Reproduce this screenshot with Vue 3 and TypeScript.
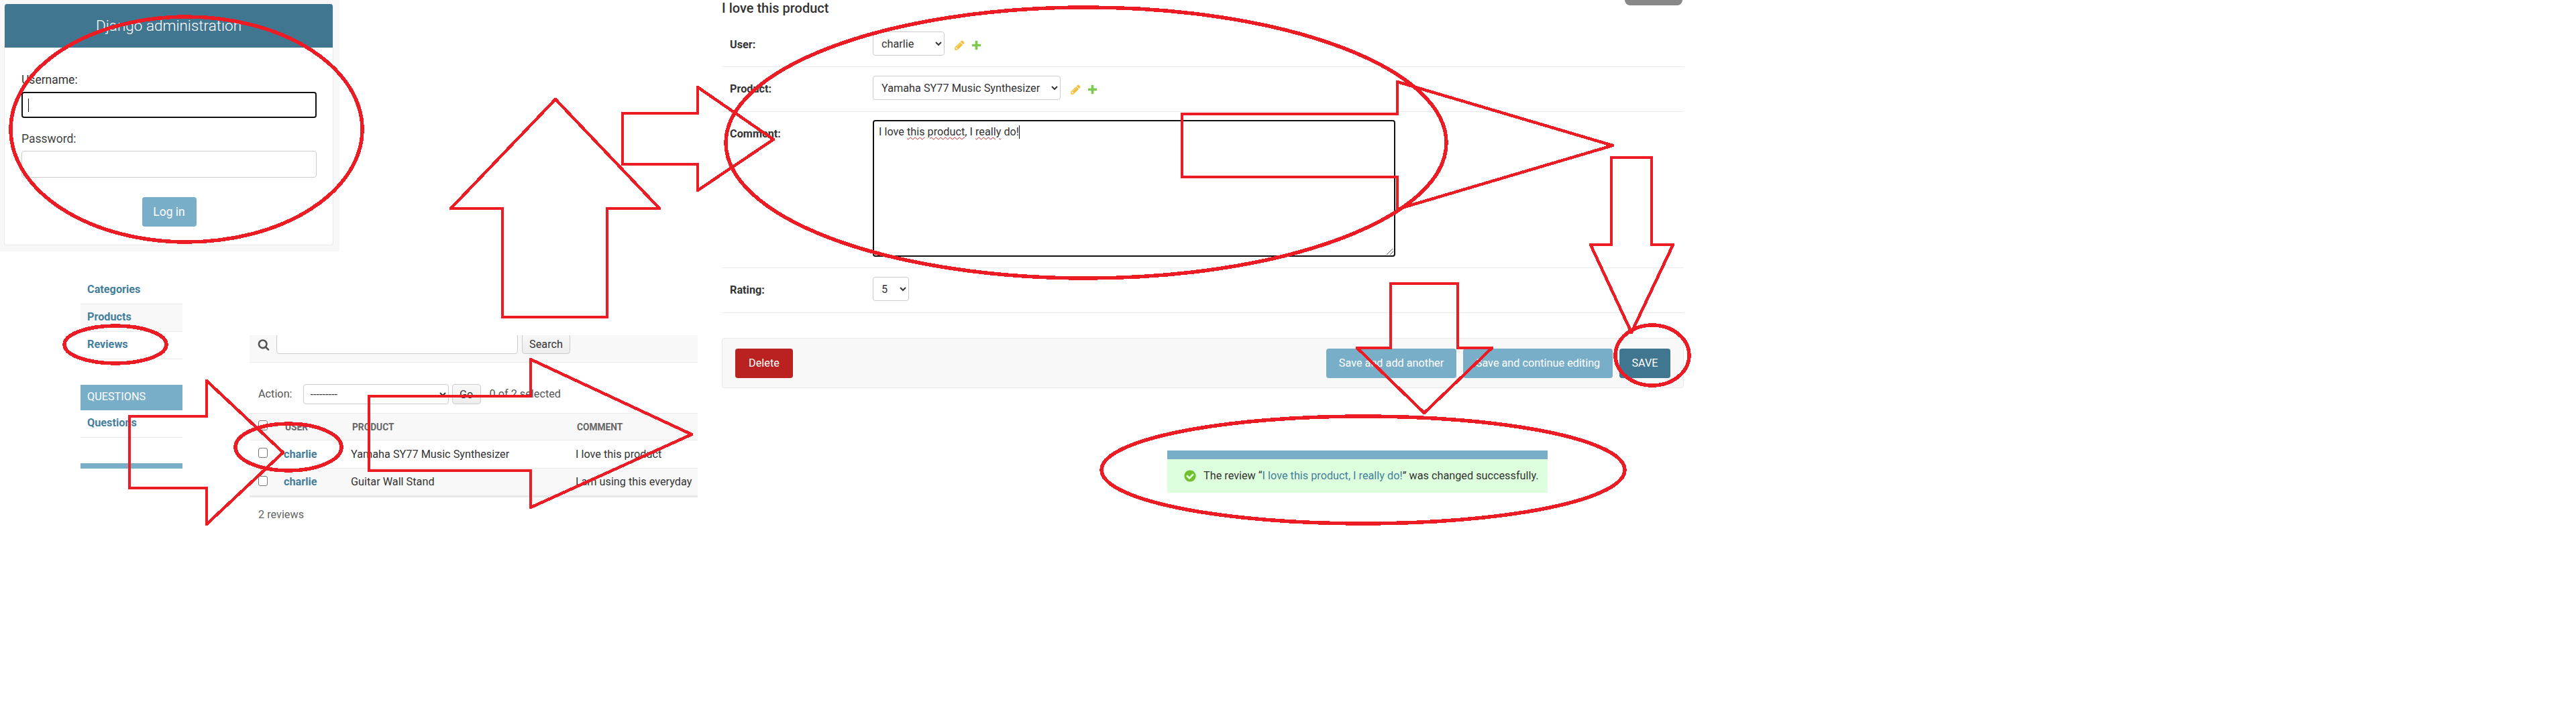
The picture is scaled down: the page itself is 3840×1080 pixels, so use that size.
<script setup lang="ts">
type Pt = [number, number]

const arrows: Pt[][] = [
  [[828, 148], [983, 311], [905, 311], [905, 473], [749, 473], [749, 311], [672, 311]],
  [[928, 169], [1040, 169], [1040, 130], [1153, 208], [1040, 284], [1040, 245], [928, 245]],
  [[1762, 170], [2083, 170], [2083, 122], [2404, 217], [2083, 312], [2083, 264], [1762, 264]],
  [[2402, 235], [2462, 235], [2462, 365], [2494, 365], [2432, 496], [2371, 365], [2402, 365]],
  [[2073, 423], [2173, 423], [2173, 519], [2224, 519], [2123, 616], [2023, 519], [2073, 519]],
  [[193, 621], [308, 621], [308, 568], [422, 675], [308, 782], [308, 728], [193, 728]],
  [[550, 591], [791, 591], [791, 536], [1031, 648], [791, 757], [791, 702], [550, 702]],
]

const rings = [
  { cx: 278, cy: 193, rx: 262, ry: 168 },
  { cx: 172, cy: 514, rx: 76, ry: 28 },
  { cx: 430, cy: 667, rx: 79, ry: 35 },
  { cx: 1619, cy: 213, rx: 537, ry: 202 },
  { cx: 2463, cy: 530, rx: 55, ry: 45 },
  { cx: 2032, cy: 701, rx: 390, ry: 80 },
]

const points = (a: Pt[]) => a.map((p) => p.join(',')).join(' ')

const reviews = [
  { user: 'charlie', product: 'Yamaha SY77 Music Synthesizer', comment: 'I love this product' },
  { user: 'charlie', product: 'Guitar Wall Stand', comment: 'I am using this everyday' },
]

const pencil =
  'M491 1536l91-91-235-235-91 91v107h128v128h107zm523-928q0-22-22-22-10 0-17 7l-542 542q-7 7-7 17 0 22 22 22 10 0 17-7l542-542q7-7 7-17zm-54-192l416 416-832 832h-416v-416zm683 96q0 53-37 90l-166 166-416-416 166-165q36-38 90-38 53 0 91 38l235 234q37 39 37 91z'
const plus =
  'M1600 796v192q0 40-28 68t-68 28h-416v416q0 40-28 68t-68 28h-192q-40 0-68-28t-28-68v-416h-416q-40 0-68-28t-28-68v-192q0-40 28-68t68-28h416v-416q0-40 28-68t68-28h192q40 0 68 28t28 68v416h416q40 0 68 28t28 68z'
const check =
  'M1412 734q0-28-18-46l-91-90q-19-19-45-19t-45 19l-408 407-226-226q-19-19-45-19t-45 19l-91 90q-18 18-18 46 0 27 18 45l362 362q19 19 45 19 27 0 46-19l543-543q18-18 18-45zm252 162q0 209-103 385.5t-279.5 279.5-385.5 103-385.5-103-279.5-279.5-103-385.5 103-385.5 279.5-279.5 385.5-103 385.5 103 279.5 279.5 103 385.5z'
const search =
  'M1216 832q0-185-131.5-316.5t-316.5-131.5-316.5 131.5-131.5 316.5 131.5 316.5 316.5 131.5 316.5-131.5 131.5-316.5zm512 832q0 52-38 90t-90 38q-54 0-90-38l-343-342q-179 124-399 124-143 0-273.5-55.5t-225-150-150-225-55.5-273.5 55.5-273.5 150-225 225-150 273.5-55.5 273.5 55.5 225 150 150 225 55.5 273.5q0 220-124 399l343 343q37 37 37 90z'
</script>

<template>
  <div class="canvas">
    <!-- login crop -->
    <section class="login">
      <div class="login-card">
        <h1>Django administration</h1>
        <form class="login-form" @submit.prevent>
          <label>Username:</label>
          <div class="login-focus"><span class="caret"></span></div>
          <label class="pw-label">Password:</label>
          <input class="login-input" type="password" />
          <button class="login-btn">Log in</button>
        </form>
      </div>
    </section>

    <!-- sidebar crop -->
    <nav class="sidebar">
      <a class="side-row">Categories</a>
      <a class="side-row shaded">Products</a>
      <a class="side-row">Reviews</a>
      <div class="side-head">Questions</div>
      <a class="side-row">Questions</a>
      <div class="side-bar"></div>
    </nav>

    <!-- changelist crop -->
    <section class="changelist">
      <div class="toolbar">
        <svg class="search-icon" viewBox="0 0 1792 1792"><path :d="search" fill="#555" /></svg>
        <input class="search-input" type="text" />
        <button class="plain-btn search-btn">Search</button>
      </div>
      <div class="actions">
        <span>Action:</span>
        <select class="action-select"><option>---------</option></select>
        <button class="plain-btn go-btn">Go</button>
        <span class="counter">0 of 2 selected</span>
      </div>
      <table class="results">
        <thead>
          <tr>
            <th class="c-check"><input type="checkbox" class="box" /></th>
            <th class="c-user">User</th>
            <th class="c-product">Product</th>
            <th>Comment</th>
          </tr>
        </thead>
        <tbody>
          <tr v-for="(r, i) in reviews" :key="i">
            <td class="c-check"><input type="checkbox" class="box" /></td>
            <td><a class="user-link">{{ r.user }}</a></td>
            <td>{{ r.product }}</td>
            <td>{{ r.comment }}</td>
          </tr>
        </tbody>
      </table>
      <p class="paginator">2 reviews</p>
    </section>

    <!-- change form crop -->
    <section class="change-form">
      <h2>I love this product</h2>
      <div class="form-row">
        <label>User:</label>
        <select class="sel sel-user"><option>charlie</option></select>
        <svg class="rel-icon first" viewBox="0 0 1792 1792"><path :d="pencil" fill="#f2bf3c" /></svg>
        <svg class="rel-icon" viewBox="0 0 1792 1792"><path :d="plus" fill="#7ec84f" /></svg>
      </div>
      <div class="form-row tall">
        <label>Product:</label>
        <select class="sel sel-product"><option>Yamaha SY77 Music Synthesizer</option></select>
        <svg class="rel-icon first" viewBox="0 0 1792 1792"><path :d="pencil" fill="#f2bf3c" /></svg>
        <svg class="rel-icon" viewBox="0 0 1792 1792"><path :d="plus" fill="#7ec84f" /></svg>
      </div>
      <div class="form-row comment-row">
        <label>Comment:</label>
        <div class="comment-box">
          I love <span class="typo">this</span> <span class="typo">product</span>, I <span class="typo">really</span> do!<span class="caret"></span>
          <svg class="grip" viewBox="0 0 12 12"><path d="M1 11 10 2M6 11l5-5" stroke="#555" fill="none" /></svg>
        </div>
      </div>
      <div class="form-row tall">
        <label>Rating:</label>
        <select class="sel sel-rating"><option>5</option></select>
      </div>
      <div class="submit-row">
        <button class="btn delete">Delete</button>
        <div class="submit-right">
          <button class="btn soft w-add">Save and add another</button>
          <button class="btn soft w-cont">Save and continue editing</button>
          <button class="btn save">SAVE</button>
        </div>
      </div>
    </section>

    <div class="history-tab"></div>

    <!-- success message crop -->
    <section class="message">
      <div class="message-bar"></div>
      <div class="message-body">
        <svg class="msg-icon" viewBox="0 0 1792 1792"><path :d="check" fill="#70bf2b" /></svg>
        <span>The review “<a class="msg-link">I love this product, I really do!</a>” was changed successfully.</span>
      </div>
    </section>

    <!-- hand-drawn annotations -->
    <svg class="marks" width="3840" height="1080" viewBox="0 0 3840 1080">
      <polygon v-for="(a, i) in arrows" :key="'a' + i" :points="points(a)" />
      <ellipse v-for="(r, i) in rings" :key="'r' + i" :cx="r.cx" :cy="r.cy" :rx="r.rx" :ry="r.ry" />
    </svg>
  </div>
</template>

<style scoped>
.canvas {
  position: relative;
  width: 3840px;
  height: 1080px;
  overflow: hidden;
  background: #fff;
  color: #333;
  font: 16.25px/20px Roboto, "Liberation Sans", sans-serif;
}

a { color: #447e9b; }
button { font-family: inherit; cursor: pointer; }
select, input { font-family: inherit; box-sizing: border-box; }

.caret {
  display: inline-block;
  width: 1px;
  height: 20px;
  background: #111;
  vertical-align: top;
}

/* login */
.login {
  position: absolute;
  left: 0;
  top: 0;
  width: 506px;
  height: 375px;
  box-sizing: border-box;
  padding: 6px 9px 9px 6px;
  background: #f8f8f8;
}
.login-card {
  height: 100%;
  box-sizing: border-box;
  background: #fff;
  border: 1px solid #eaeaea;
  border-top: 0;
  border-radius: 4px;
  overflow: hidden;
}
.login-card h1 {
  margin: 0;
  height: 65px;
  background: #417690;
  color: #fff;
  font-size: 22.5px;
  font-weight: 300;
  line-height: 64px;
  text-align: center;
}
.login-form {
  display: flex;
  flex-direction: column;
  padding: 38px 24px 0 25px;
  font-size: 17.5px;
  color: #444;
}
.login-form label { line-height: 20px; height: 28px; color: #333; }
.login-form .pw-label { margin-top: 21px; color: #444; }
.login-focus {
  height: 39px;
  box-sizing: border-box;
  border: 2px solid #111;
  border-radius: 4px;
  padding: 8px 8px;
}
.login-input {
  height: 40px;
  border: 1px solid #ccc;
  border-radius: 4px;
}
.login-btn {
  align-self: center;
  width: 81px;
  height: 44px;
  margin-top: 29px;
  border: 0;
  border-radius: 4px;
  background: #79aec8;
  color: #fff;
  font-size: 17.5px;
}

/* sidebar */
.sidebar {
  position: absolute;
  left: 120px;
  top: 413px;
  width: 152px;
  display: flex;
  flex-direction: column;
}
.side-row {
  height: 41px;
  box-sizing: border-box;
  padding: 9px 10px 0;
  border-bottom: 1px solid #eaeaea;
  font-weight: 700;
}
.side-row.shaded { background: #f8f8f8; }
.side-head {
  height: 38px;
  margin-top: 38px;
  padding: 8px 10px 0;
  box-sizing: border-box;
  background: #79aec8;
  color: #fff;
  text-transform: uppercase;
}
.side-bar {
  height: 8px;
  margin-top: 38px;
  background: #79aec8;
}

/* changelist */
.changelist {
  position: absolute;
  left: 372px;
  top: 500px;
  width: 668px;
  color: #444;
}
.toolbar {
  display: flex;
  align-items: flex-start;
  height: 40px;
  overflow: hidden;
  background: #f8f8f8;
  border-bottom: 1px solid #eaeaea;
  padding-left: 13px;
}
.search-icon { width: 18px; height: 18px; margin: 5px 0 0 -1px; flex: none; }
.search-input {
  width: 360px;
  height: 30px;
  margin: -2px 0 0 10px;
  background: #fff;
  border: 1px solid #ccc;
  border-radius: 4px;
}
.plain-btn {
  height: 30px;
  padding: 0;
  border: 1px solid #ccc;
  border-radius: 4px;
  background: linear-gradient(#f8f8f8, #ededed);
  color: #333;
  font-size: 16.25px;
}
.search-btn { width: 72px; margin: -2px 0 0 6px; }
.actions {
  display: flex;
  align-items: center;
  height: 30px;
  margin-top: 32px;
  padding-left: 13px;
  color: #555;
}
.action-select {
  width: 217px;
  height: 30px;
  margin-left: 16px;
  padding-left: 6px;
  background: #fff;
  border: 1px solid #ccc;
  border-radius: 4px;
  color: #333;
  font-size: 16.25px;
}
.go-btn { width: 43px; margin-left: 5px; }
.counter { margin-left: 13px; }

.results {
  width: 668px;
  margin-top: 13px;
  border-collapse: collapse;
  table-layout: fixed;
}
.results th {
  height: 40px;
  padding: 0 0 0 13px;
  box-sizing: border-box;
  background: #f8f8f8;
  border-top: 1px solid #eaeaea;
  border-bottom: 1px solid #eaeaea;
  color: #666;
  font-size: 13.75px;
  font-weight: 700;
  text-align: left;
  text-transform: uppercase;
}
.results td {
  height: 42px;
  padding: 0 0 0 11px;
  box-sizing: border-box;
  border-bottom: 1px solid #eaeaea;
  color: #333;
}
.results tbody tr:nth-child(2) td {
  background: #f8f8f8;
  border-bottom: 3px solid #e8e8e8;
}
.c-check { width: 40px; }
.c-user { width: 100px; }
.c-product { width: 335px; }
.results th.c-check,
.results td.c-check { padding-left: 13px; }
.box {
  display: block;
  appearance: none;
  width: 14px;
  height: 15px;
  margin: -4px 0 0;
  background: #fff;
  border: 1px solid #767676;
  border-radius: 3px;
}
.user-link { font-weight: 700; }
.paginator { margin: 16px 0 0 13px; color: #666; }

/* change form */
.change-form {
  position: absolute;
  left: 1076px;
  top: 0;
  width: 1434px;
}
.change-form h2 {
  margin: 0;
  height: 34px;
  font-size: 20px;
  line-height: 24px;
  font-weight: 500;
}
.form-row {
  display: flex;
  align-items: flex-start;
  padding: 13px 0 16px;
  border-bottom: 1px solid #eaeaea;
}
.form-row.tall { padding-bottom: 17px; }
.form-row label {
  width: 213px;
  margin-left: 12px;
  padding-top: 10px;
  font-weight: 700;
  flex: none;
}
.sel {
  height: 36px;
  padding-left: 8px;
  background: #fff;
  border: 1px solid #ccc;
  border-radius: 4px;
  color: #333;
  font-size: 16.25px;
}
.sel-user { width: 107px; }
.sel-product { width: 280px; }
.sel-rating { width: 54px; }
.rel-icon { width: 17px; height: 17px; margin: 12px 0 0 8px; flex: none; }
.rel-icon.first { margin-left: 14px; }
.comment-box {
  position: relative;
  width: 779px;
  height: 204px;
  box-sizing: border-box;
  padding: 6px 7px;
  border: 2px solid #111;
  border-radius: 4px;
}
.comment-row { padding-top: 12px; }
.comment-row label { padding-top: 11px; }
.typo { text-decoration: underline wavy #d22; text-decoration-thickness: 1px; text-underline-offset: 2px; }
.grip { position: absolute; right: 0; bottom: 0; width: 12px; height: 12px; }
.submit-row {
  display: flex;
  align-items: center;
  justify-content: space-between;
  height: 75px;
  margin-top: 37px;
  box-sizing: border-box;
  padding: 0 19px 0 19px;
  background: #f8f8f8;
  border: 1px solid #eaeaea;
  border-radius: 4px;
}
.submit-right { display: flex; gap: 10px; }
.btn {
  height: 44px;
  padding: 0;
  border: 0;
  border-radius: 4px;
  color: #fff;
  font-size: 16.25px;
}
.delete { width: 86px; background: #ba2121; }
.soft { background: #79aec8; }
.w-add { width: 194px; }
.w-cont { width: 223px; }
.save { width: 76px; background: #417690; }
.history-tab {
  position: absolute;
  left: 2422px;
  top: 0;
  width: 86px;
  height: 8px;
  background: #888;
  border-radius: 0 0 12px 12px;
}

/* message */
.message {
  position: absolute;
  left: 1740px;
  top: 672px;
  width: 567px;
}
.message-bar { height: 13px; background: #79aec8; }
.message-body {
  display: flex;
  align-items: center;
  height: 50px;
  padding-left: 24px;
  background: #dfd;
  box-sizing: border-box;
}
.msg-icon { width: 20px; height: 20px; flex: none; margin-right: 10px; }
.msg-link { color: #447e9b; }

/* annotations */
.marks {
  position: absolute;
  left: 0;
  top: 0;
  pointer-events: none;
}
.marks polygon,
.marks ellipse {
  fill: none;
  stroke: #ed1c24;
  stroke-linejoin: round;
  shape-rendering: crispEdges;
}
.marks polygon { stroke-width: 4.5; }
.marks ellipse { stroke-width: 5.5; }
</style>
